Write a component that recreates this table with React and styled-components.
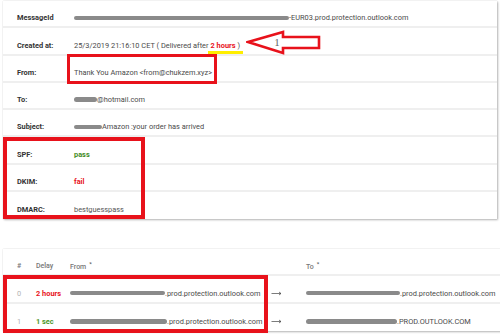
import React from 'react'
import styled, { createGlobalStyle } from 'styled-components'

const GlobalStyle = createGlobalStyle`
  html, body { margin: 0; padding: 0; background: #fff; overflow: hidden; }
  body { font-family: Roboto, "Liberation Sans", Arial, sans-serif; }
`

const RED = '#e8121b'

const Page = styled.div`
  position: relative;
  width: 500px;
  height: 335px;
  padding: 1px 0 0 3px;
  box-sizing: border-box;
  overflow: hidden;
`

const Card = styled.div`
  background: #fff;
  width: ${p => p.$width}px;
  margin-top: ${p => p.$top || 0}px;
  box-shadow: 0 0 1px rgba(0, 0, 0, 0.2), 1px 1px 2px rgba(0, 0, 0, 0.28);
`

const Row = styled.div`
  position: relative;
  display: grid;
  grid-template-columns: ${p => p.$cols};
  align-items: center;
  height: 27.25px;
  box-sizing: border-box;
  padding: 8.5px 0 0 14px;
  border-bottom: 2px solid #efefef;
  font-size: 7.4px;
  white-space: nowrap;
  &:last-child { border-bottom: none; }
`

const Label = styled.span`
  font-weight: 700;
  color: #333;
`

const Value = styled.span`
  color: ${p => p.$color || '#4a4a4a'};
  font-weight: ${p => p.$bold ? 700 : 400};
  display: flex;
  align-items: center;
`

const Redact = styled.span`
  display: inline-block;
  width: ${p => p.$w}px;
  height: 4.5px;
  border-radius: 3px;
  background: #8a8a8a;
  filter: blur(0.4px);
`

const Underlined = styled.span`
  position: relative;
  color: ${RED};
  font-weight: 700;
  margin: 0 2px;
  &::after {
    content: '';
    position: absolute;
    left: -3px;
    right: -7px;
    bottom: -4px;
    height: 2.5px;
    background: #ffee00;
  }
`

const Head = styled.span`
  color: #777;
  font-weight: 500;
  font-size: 7px;
  sup {
    font-size: 6px;
    margin-left: 3px;
    color: #555;
  }
`

const Index = styled.span`
  color: #b3b3b3;
`

const Frame = styled.div`
  position: absolute;
  left: ${p => p.$x}px;
  top: ${p => p.$y}px;
  width: ${p => p.$w}px;
  height: ${p => p.$h}px;
  box-sizing: border-box;
  border: ${p => p.$t}px solid ${RED};
  pointer-events: none;
`

const Callout = styled.svg`
  position: absolute;
  left: 246px;
  top: 29px;
`

const Arrow = () => (
  <svg width="11" height="6" viewBox="0 0 11 6">
    <path d="M0.5 3.5H10M8 2L10 3.5L8 5" stroke="#444" strokeWidth="0.7" fill="none" />
  </svg>
)

const details = [
  ['MessageId', <Value><Redact $w={215} />-EUR03.prod.protection.outlook.com</Value>],
  ['Created at:', <Value>25/3/2019 21:16:10 CET ( Delivered after<Underlined>2 hours</Underlined>)</Value>],
  ['From:', <Value>Thank You Amazon &lt;from@chukzem.xyz&gt;</Value>],
  ['To:', <Value><Redact $w={23} />@hotmail.com</Value>],
  ['Subject:', <Value><Redact $w={28} />Amazon :your order has arrived</Value>],
  ['SPF:', <Value $color="#3f8a1c" $bold>pass</Value>],
  ['DKIM:', <Value $color={RED} $bold>fail</Value>],
  ['DMARC:', <Value $color="#555">bestguesspass</Value>],
]

const hops = [
  { i: 0, delay: '2 hours', color: RED, fw: 95, from: '.prod.protection.outlook.com', tw: 94, to: '.prod.protection.outlook.com' },
  { i: 1, delay: '1 sec', color: '#4d962a', fw: 97, from: '.prod.protection.outlook.com', tw: 91, to: '.PROD.OUTLOOK.COM' },
]

const hopCols = '19px 34px 201px 35px 1fr'

export default function App() {
  return (
    <Page>
      <GlobalStyle />
      <Card $width={494}>
        {details.map(([label, value]) => (
          <Row key={label} $cols="57px 1fr">
            <Label>{label}</Label>
            {value}
          </Row>
        ))}
      </Card>

      <Card $width={510} $top={30}>
        <Row $cols={hopCols}>
          <Head>#</Head>
          <Head>Delay</Head>
          <Head>From<sup>*</sup></Head>
          <span />
          <Head>To<sup>*</sup></Head>
        </Row>
        {hops.map(h => (
          <Row key={h.i} $cols={hopCols}>
            <Index>{h.i}</Index>
            <Value $color={h.color} $bold>{h.delay}</Value>
            <Value><Redact $w={h.fw} />{h.from}</Value>
            <Arrow />
            <Value><Redact $w={h.tw} />{h.to}</Value>
          </Row>
        ))}
      </Card>

      <Callout width="76" height="28" viewBox="0 0 76 28">
        <polygon points="2,13 37,3 37,8 73,8 73,19 37,19 37,24" fill="#fff" stroke={RED} strokeWidth="2.6" strokeLinejoin="miter" />
        <text x="31" y="17" fontFamily="'Liberation Serif', serif" fontSize="11" fill="#666" textAnchor="middle">1</text>
      </Callout>
      <Frame $x={67} $y={54} $w={150} $h={30} $t={3} />
      <Frame $x={3} $y={137} $w={142} $h={82} $t={4} />
      <Frame $x={3} $y={275} $w={265} $h={58} $t={4} />
    </Page>
  )
}
